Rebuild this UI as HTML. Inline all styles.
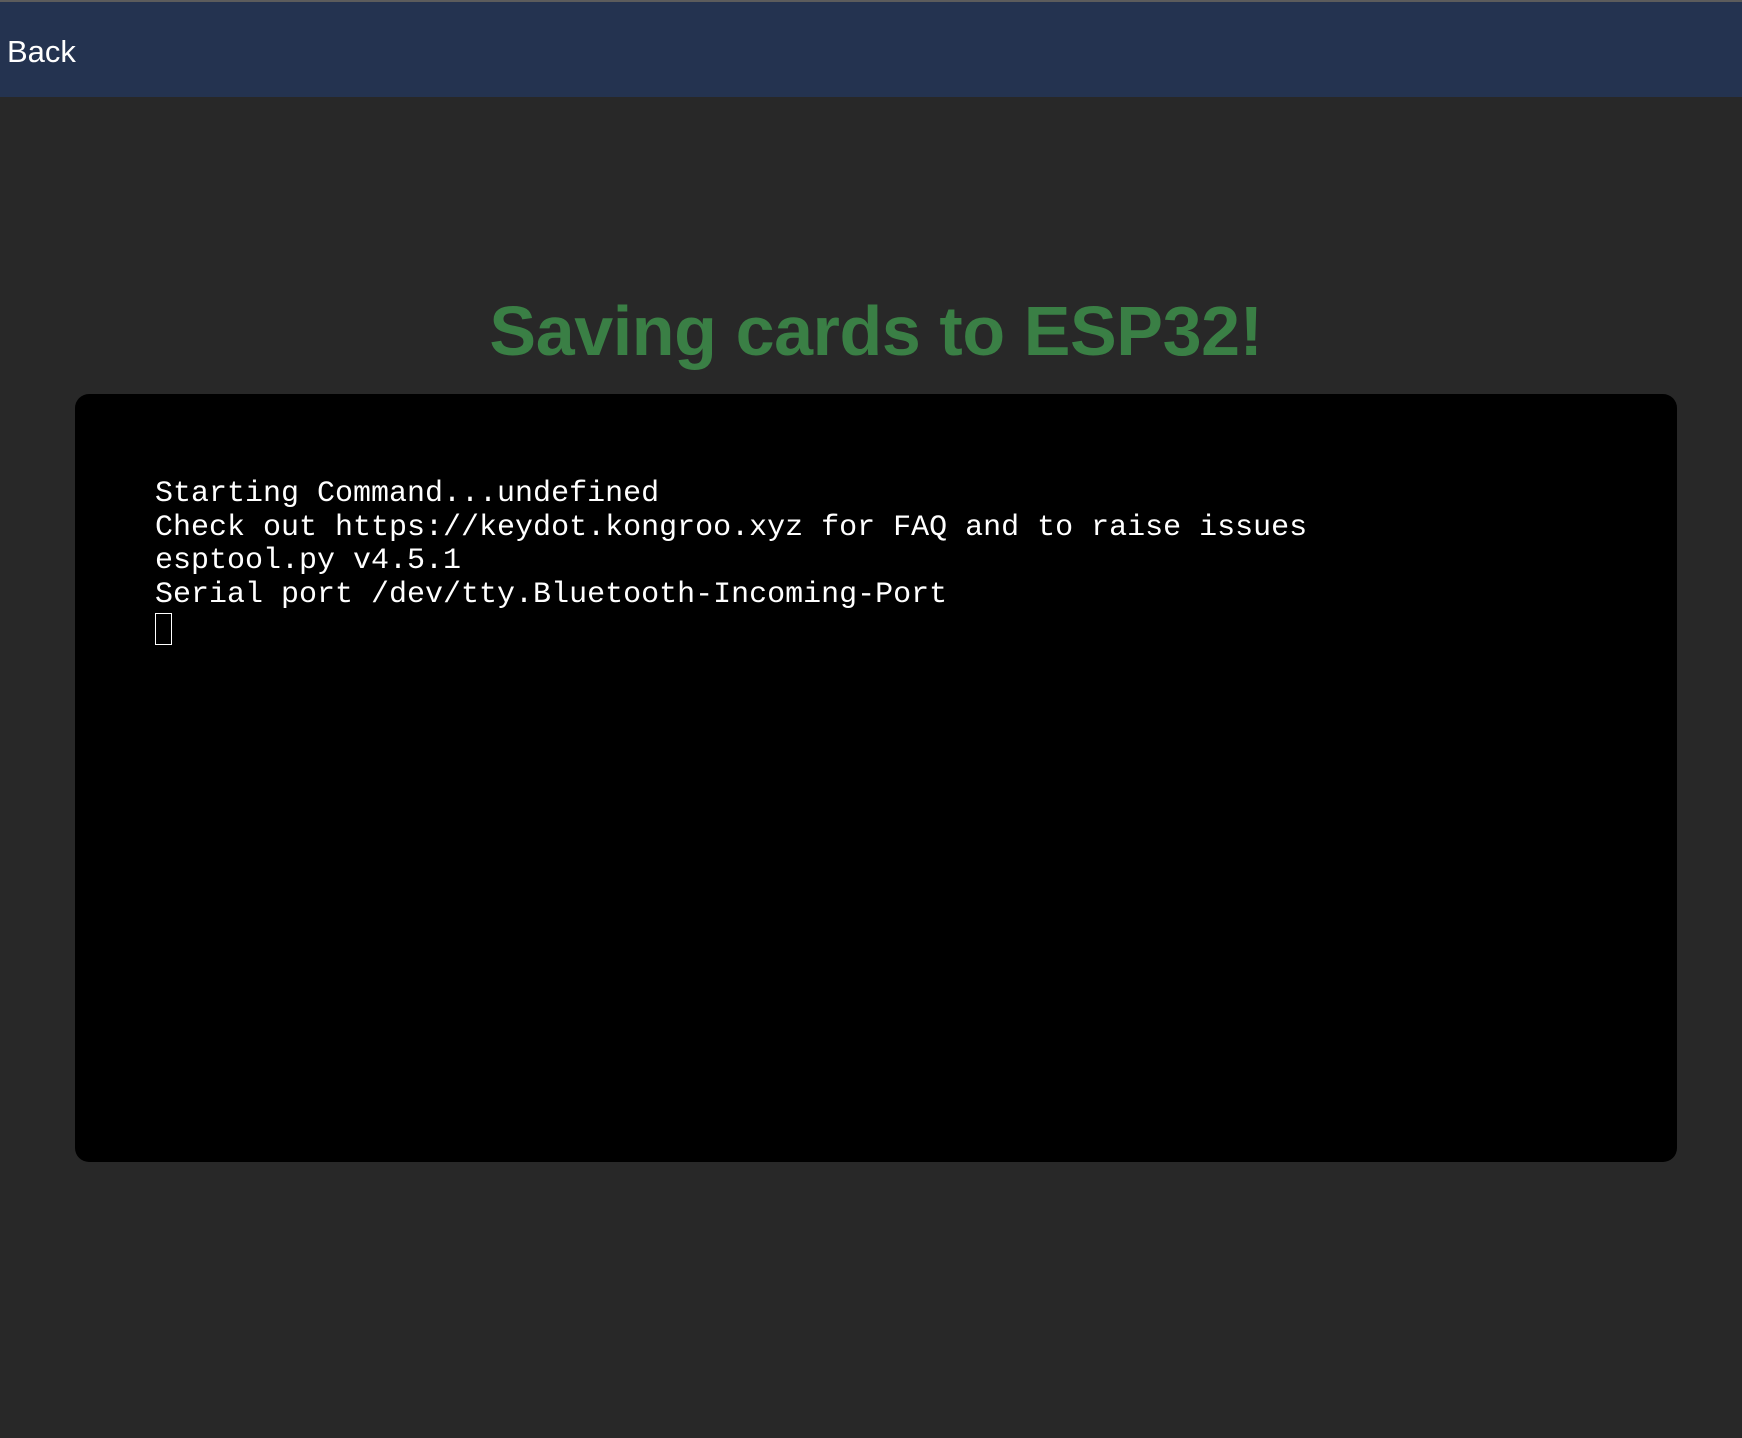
<!DOCTYPE html>
<html><head><meta charset="utf-8"><style>
html,body{margin:0;padding:0;width:1742px;height:1438px;background:#282828;overflow:hidden}
.top{position:absolute;left:0;top:0;width:1742px;height:2px;background:#5c5c5c}
.hdr{position:absolute;left:0;top:2px;width:1742px;height:95px;background:#243350}
.back{position:absolute;left:7px;top:32px;font:31px/40px "Liberation Sans",sans-serif;color:#fff}
h1{position:absolute;left:75px;width:1602px;top:286px;margin:0;text-align:center;font:bold 70px/90px "Liberation Sans",sans-serif;color:#3a7f45;letter-spacing:-0.4px}
.term{position:absolute;left:75px;top:394px;width:1602px;height:768px;background:#000;border-radius:14px}
pre{position:absolute;left:155px;top:478px;margin:0;font:30px/33.7px "Liberation Mono",monospace;color:#fff}
.cur{position:absolute;left:155px;top:613px;width:15px;height:30px;border:1px solid #fff}
</style></head><body>
<div class="top"></div>
<div class="hdr"></div>
<div class="back">Back</div>
<h1>Saving cards to ESP32!</h1>
<div class="term"></div>
<pre>Starting Command...undefined
Check out https://keydot.kongroo.xyz for FAQ and to raise issues
esptool.py v4.5.1
Serial port /dev/tty.Bluetooth-Incoming-Port</pre>
<div class="cur"></div>
</body></html>
